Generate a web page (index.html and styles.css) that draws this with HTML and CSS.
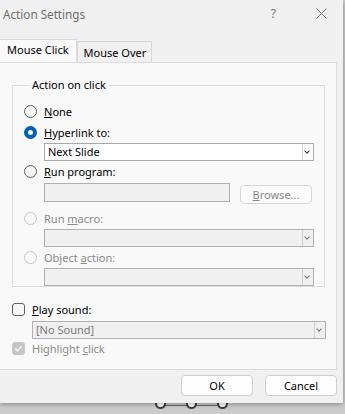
FILE: index.html
```html
<!DOCTYPE html>
<html lang="en">
<head>
    <meta charset="UTF-8">
    <meta name="viewport" content="width=device-width, initial-scale=1.0">
    <title>Action Settings</title>
    <link rel="stylesheet" href="styles.css">
</head>
<body>
    <div class="stage">
        <!-- poignées de sélection derrière la boîte -->
        <div class="handles">
            <span class="handle-line"></span>
            <span class="handle" style="left: 155px"></span>
            <span class="handle" style="left: 186px"></span>
            <span class="handle" style="left: 217px"></span>
        </div>

        <div class="dialog">
            <div class="titlebar">
                <span class="title">Action Settings</span>
                <span class="help">?</span>
                <span class="close">
                    <svg width="11" height="11" viewBox="0 0 11 11"><path d="M0.5 0.5 L10.5 10.5 M10.5 0.5 L0.5 10.5" stroke="#7a7a7a" stroke-width="1"/></svg>
                </span>
            </div>

            <div class="tabs">
                <div class="tab active">Mouse Click</div>
                <div class="tab">Mouse Over</div>
            </div>

            <div class="panel">
                <fieldset class="group">
                    <legend>Action on click</legend>

                    <div class="opt">
                        <span class="radio"></span>
                        <span><u>N</u>one</span>
                    </div>

                    <div class="opt">
                        <span class="radio checked"></span>
                        <span><u>H</u>yperlink to:</span>
                    </div>
                    <div class="select">
                        <span class="value">Next Slide</span>
                        <span class="arrow"></span>
                    </div>

                    <div class="opt">
                        <span class="radio"></span>
                        <span><u>R</u>un program:</span>
                    </div>
                    <div class="program">
                        <span class="field"></span>
                        <span class="browse"><u>B</u>rowse...</span>
                    </div>

                    <div class="opt disabled macro">
                        <span class="radio"></span>
                        <span>Run <u>m</u>acro:</span>
                    </div>
                    <div class="select disabled">
                        <span class="value"></span>
                        <span class="arrow"></span>
                    </div>

                    <div class="opt disabled">
                        <span class="radio"></span>
                        <span>Object <u>a</u>ction:</span>
                    </div>
                    <div class="select disabled">
                        <span class="value"></span>
                        <span class="arrow"></span>
                    </div>
                </fieldset>

                <div class="check-row sound">
                    <span class="checkbox"></span>
                    <span><u>P</u>lay sound:</span>
                </div>
                <div class="select disabled wide">
                    <span class="value">[No Sound]</span>
                    <span class="arrow"></span>
                </div>

                <div class="check-row disabled">
                    <span class="checkbox checked">
                        <svg width="9" height="9" viewBox="0 0 9 9"><path d="M1.5 4.8 L3.6 6.8 L7.6 2.2" fill="none" stroke="#fff" stroke-width="1.2"/></svg>
                    </span>
                    <span>Highlight <u>c</u>lick</span>
                </div>
            </div>

            <div class="footer">
                <button>OK</button>
                <button>Cancel</button>
            </div>
        </div>
    </div>
</body>
</html>
```

FILE: styles.css
```css
body {
    margin: 0;
    padding: 0;
    background: #cbcbcb;
    font-family: "Noto Sans", "Open Sans", sans-serif;
    font-size: 11px;
    color: #1a1a1a;
}
.stage {
    position: relative;
    width: 345px;
    height: 414px;
    overflow: hidden;
}
.handles {
    position: absolute;
    top: 0;
    left: 0;
}
.handle-line {
    position: absolute;
    left: 160px;
    top: 405px;
    width: 62px;
    border-top: 1px solid #6a6a6a;
}
.handle {
    position: absolute;
    top: 398px;
    width: 7px;
    height: 7px;
    border: 2px solid #3a3a3a;
    border-radius: 50%;
    background: #fff;
}
.dialog {
    position: relative;
    width: 343px;
    height: 403px;
    background: #f0f0f0;
    box-shadow: 0 1px 5px rgba(0, 0, 0, 0.35);
    display: flex;
    flex-direction: column;
}
.titlebar {
    height: 27px;
    display: flex;
    align-items: center;
}
.title {
    flex: 1;
    padding-left: 3px;
    font-size: 11.7px;
    color: #6e6e6e;
}
.help {
    font-size: 12px;
    color: #7a7a7a;
    margin-right: 40px;
}
.close {
    display: flex;
    margin-right: 16px;
}
.tabs {
    display: flex;
    align-items: flex-end;
    height: 23px;
    margin-top: 12px;
}
.tab {
    height: 20px;
    line-height: 21px;
    padding: 0 5px 0 6px;
    border: 1px solid #d9d9d9;
    border-bottom: none;
    background: #f0f0f0;
    color: #000;
}
.tab.active {
    height: 22px;
    line-height: 20px;
    padding: 0 7px 0 7px;
    background: #f9f9f9;
    border-left: none;
}
.panel {
    box-sizing: border-box;
    height: 308px;
    margin-right: 6px;
    background: #f9f9f9;
    border: 1px solid #dcdcdc;
    border-left: none;
    padding: 14px 11px 0 12px;
}
.group {
    margin: 0;
    padding: 8px 10px 10px 11px;
    border: 1px solid #dcdcdc;
    height: 210px;
    box-sizing: border-box;
}
.group legend {
    padding: 0 3px;
    margin-left: 5px;
    line-height: 16px;
    color: #000;
}
.opt {
    display: flex;
    align-items: center;
    gap: 7px;
    height: 21px;
    color: #000;
}
.opt.disabled {
    color: #8a8a8a;
}
.opt.macro {
    margin-top: 4px;
}
.radio {
    width: 13px;
    height: 13px;
    box-sizing: border-box;
    border: 1px solid #606060;
    border-radius: 50%;
    background: #f6f6f6;
}
.radio.checked {
    border: 4px solid #005fb8;
    background: #fff;
}
.opt.disabled .radio {
    border-color: #c6c6c6;
    background: #f9f9f9;
}
.select {
    display: flex;
    height: 18px;
    margin-left: 20px;
    box-sizing: border-box;
    border: 1px solid #a8a8a8;
    background: #fff;
}
.select .value {
    flex: 1;
    padding-left: 3px;
    line-height: 16px;
    color: #000;
}
.select .arrow {
    width: 10px;
    border-left: 1px solid #d0d0d0;
    position: relative;
}
.select .arrow::after {
    content: "";
    position: absolute;
    left: 2px;
    top: 5px;
    width: 3px;
    height: 3px;
    border-right: 1px solid #333;
    border-bottom: 1px solid #333;
    transform: rotate(45deg);
}
.select.disabled {
    background: #f0f0f0;
    border-color: #b0b0b0;
}
.select.disabled .value {
    color: #7a7a7a;
}
.select.disabled .arrow::after {
    border-color: #777;
}
.select.wide {
    margin-left: 20px;
    margin-right: -1px;
}
.program {
    display: flex;
    align-items: flex-start;
    margin-left: 20px;
    margin-top: 1px;
}
.field {
    width: 186px;
    height: 19px;
    box-sizing: border-box;
    border: 1px solid #b0b0b0;
    background: #f0f0f0;
}
.browse {
    margin-left: 10px;
    margin-top: 2px;
    width: 72px;
    height: 19px;
    line-height: 17px;
    box-sizing: border-box;
    border: 1px solid #d6d6d6;
    border-radius: 4px;
    background: #fbfbfb;
    color: #8a8a8a;
    text-align: center;
}
.check-row {
    display: flex;
    align-items: center;
    gap: 7px;
    height: 19px;
    color: #000;
}
.check-row.sound {
    height: 21px;
    margin-top: 12px;
    margin-bottom: 1px;
}
.check-row.disabled {
    color: #8a8a8a;
    margin-top: 0;
}
.checkbox {
    width: 13px;
    height: 13px;
    box-sizing: border-box;
    border: 1px solid #606060;
    border-radius: 3px;
    background: #f6f6f6;
    display: flex;
    align-items: center;
    justify-content: center;
}
.checkbox.checked {
    border-color: #c6c6c6;
    background: #c6c6c6;
}
.footer {
    flex: 1;
    display: flex;
    justify-content: flex-end;
    align-items: flex-start;
    gap: 12px;
    padding: 5px 6px 0 0;
}
.footer button {
    width: 72px;
    height: 21px;
    padding: 0;
    border: 1px solid #d0d0d0;
    border-radius: 4px;
    background: #fdfdfd;
    font-family: inherit;
    font-size: 11px;
    color: #000;
}
```
